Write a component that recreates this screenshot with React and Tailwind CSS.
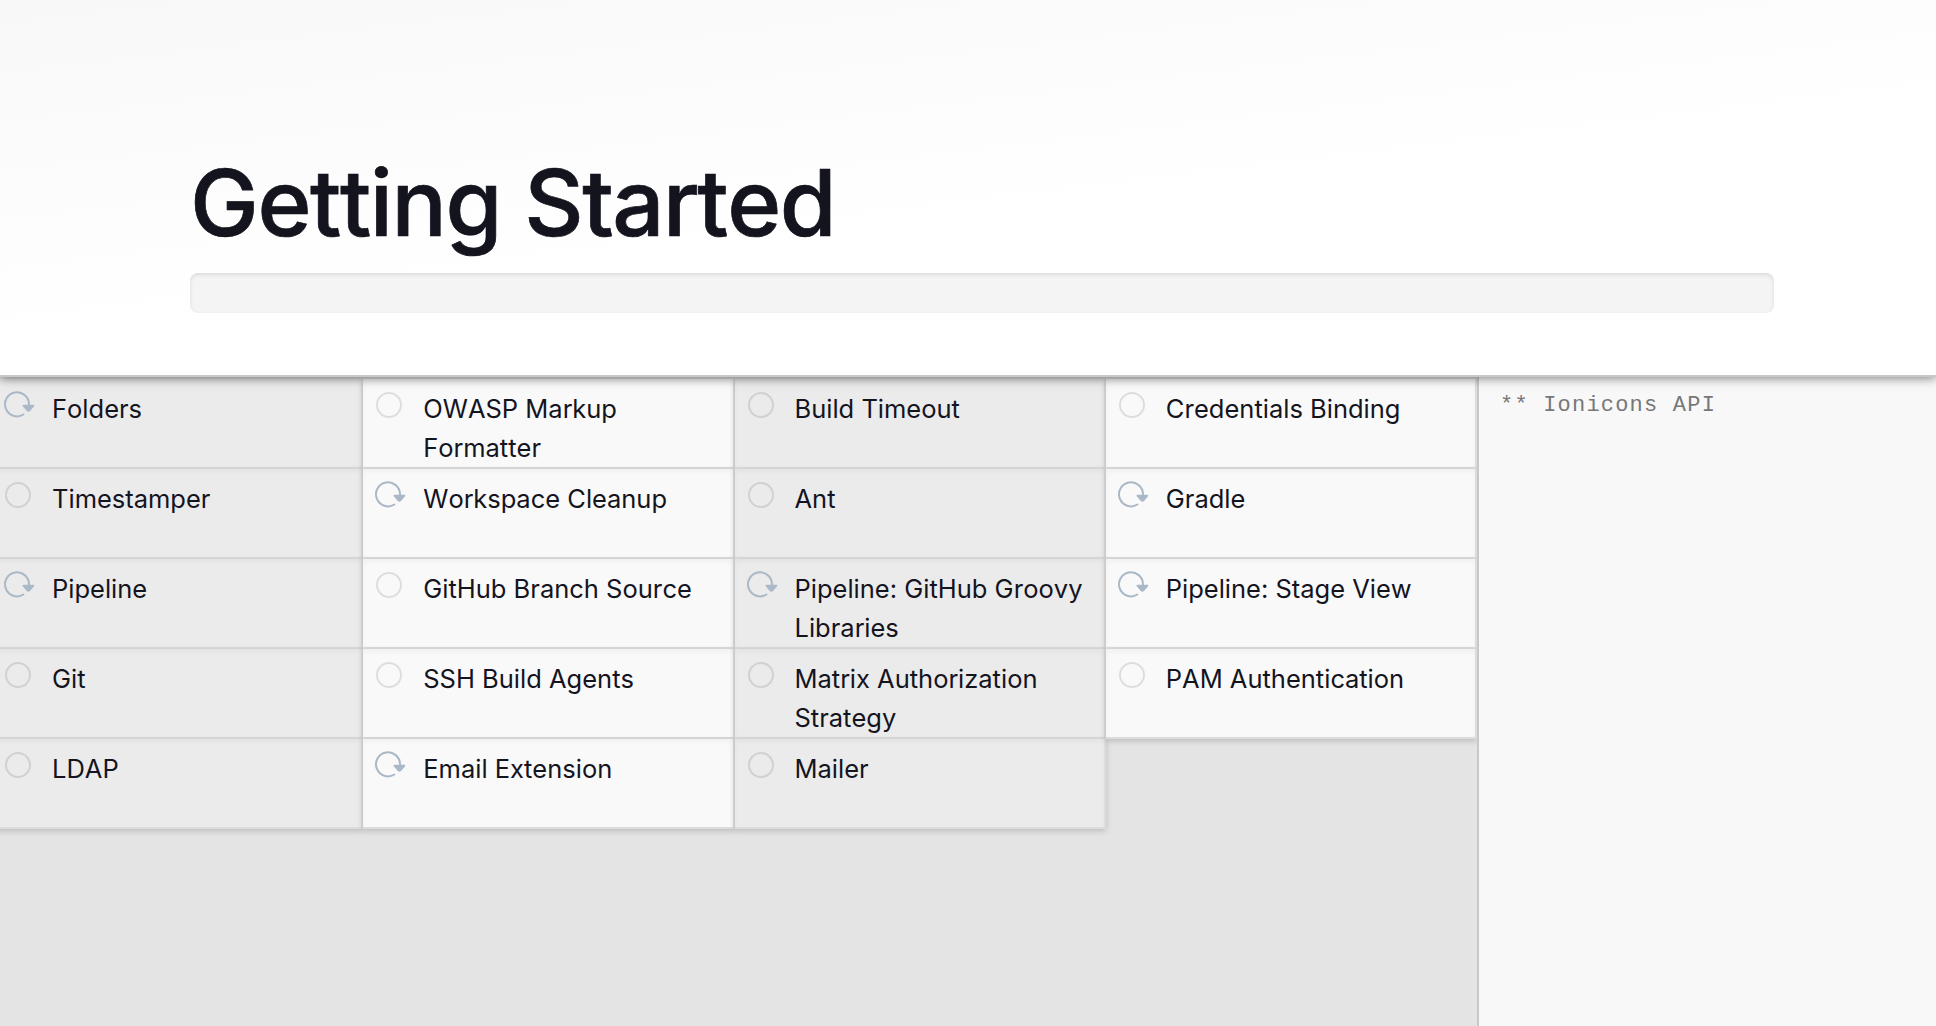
import React from "react";

const columns = [
  [
    { name: "Folders", busy: true },
    { name: "Timestamper" },
    { name: "Pipeline", busy: true },
    { name: "Git" },
    { name: "LDAP" },
  ],
  [
    { name: "OWASP Markup Formatter" },
    { name: "Workspace Cleanup", busy: true },
    { name: "GitHub Branch Source" },
    { name: "SSH Build Agents" },
    { name: "Email Extension", busy: true },
  ],
  [
    { name: "Build Timeout" },
    { name: "Ant" },
    { name: "Pipeline: GitHub Groovy Libraries", busy: true },
    { name: "Matrix Authorization Strategy" },
    { name: "Mailer" },
  ],
  [
    { name: "Credentials Binding" },
    { name: "Gradle", busy: true },
    { name: "Pipeline: Stage View", busy: true },
    { name: "PAM Authentication" },
  ],
];

const PendingIcon = () => (
  <svg className="w-8 h-[26px] shrink-0" viewBox="0 0 32 26" fill="none">
    <circle cx="14" cy="13" r="12" stroke="#000" strokeOpacity="0.11" strokeWidth="2" />
  </svg>
);

const BusyIcon = () => (
  <svg className="w-8 h-[26px] shrink-0 overflow-visible" viewBox="0 0 32 26" fill="none">
    <path
      d="M19.4 22.5 A12 12 0 1 1 25 12.4 V14"
      stroke="#aab8c7"
      strokeWidth="2"
      strokeLinecap="round"
    />
    <path
      d="M19.4 13.7 H29.4 L25.6 18.1 Q24.4 19.3 23.2 18.1 Z"
      fill="#aab8c7"
      stroke="#aab8c7"
      strokeWidth="1.8"
      strokeLinejoin="round"
    />
  </svg>
);

const Plugin = ({ name, busy, dark }) => (
  <div
    className={`flex h-[90px] pt-[10px] pl-3 border-r-2 border-b-2 border-[#dcdcdc] shadow-[0_2px_6px_rgba(0,0,0,0.18),inset_0_3px_5px_rgba(0,0,0,0.035)] ${
      dark ? "bg-[#ebebeb]" : "bg-[#f9f9f9]"
    }`}
  >
    <div className="pt-[3px]">{busy ? <BusyIcon /> : <PendingIcon />}</div>
    <span className="ml-4 text-[25.5px] leading-[39px] text-[#14141f]">{name}</span>
  </div>
);

const App = () => {
  return (
    <div className="w-full h-[1026px] flex flex-col overflow-hidden bg-[#e4e4e4] font-['Inter',sans-serif] [font-kerning:none]">
      <header className="relative z-10 h-[377px] shrink-0 pl-[190px] pr-[162px] pt-[147px] border-b-2 border-[#c8c8c8] bg-[linear-gradient(173deg,#f8f8f8_0%,#ffffff_56%)] shadow-[0_1px_10px_rgba(0,0,0,0.5)]">
        <h1 className="h-[126px] text-[92px] leading-[111px] font-medium tracking-[-1.4px] whitespace-nowrap text-[#14141f] [-webkit-text-stroke:0.7px_#14141f]">
          Getting Started
        </h1>
        <div className="h-10 rounded-lg bg-[#f4f4f4] shadow-[inset_0_2px_4px_rgba(0,0,0,0.1)]" />
      </header>

      <main className="flex-1 flex min-h-0">
        <div className="w-[1477px] shrink-0 flex overflow-hidden pt-0.5">
          <div className="flex -ml-2 shrink-0">
            {columns.map((plugins, i) => (
              <div key={i} className="w-[371.25px] shrink-0">
                {plugins.map((plugin) => (
                  <Plugin key={plugin.name} {...plugin} dark={i % 2 === 0} />
                ))}
              </div>
            ))}
          </div>
        </div>
        <aside className="flex-1 border-l-2 border-[#c8c8c8] bg-[#f8f8f8] pl-[21px] pt-[14px]">
          <pre className="font-['Liberation_Mono',monospace] text-[22px] leading-[30px] tracking-[1.2px] text-[#777777]">
            ** Ionicons API
          </pre>
        </aside>
      </main>
    </div>
  );
};

export default App;
